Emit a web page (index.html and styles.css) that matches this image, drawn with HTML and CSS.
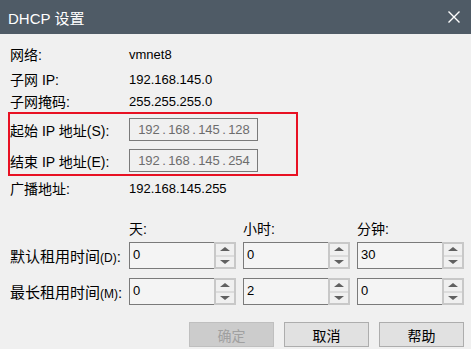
FILE: index.html
```html
<!DOCTYPE html>
<html lang="zh-CN">
<head>
  <meta charset="UTF-8" />
  <title>DHCP 设置</title>
  <link rel="stylesheet" href="styles.css">
</head>
<body>
  <div class="dialog">
    <div class="titlebar">
      <span class="title">DHCP 设置</span>
      <svg class="close" width="12" height="12" viewBox="0 0 12 12">
        <path d="M0.5 0.5 L11.5 11.5 M11.5 0.5 L0.5 11.5" stroke="#fff" stroke-width="1.4" fill="none"/>
      </svg>
    </div>

    <div class="content">
      <div class="row r-net"><span class="label">网络:</span><span class="value">vmnet8</span></div>
      <div class="row r-ip"><span class="label">子网 IP:</span><span class="value">192.168.145.0</span></div>
      <div class="row r-mask"><span class="label">子网掩码:</span><span class="value">255.255.255.0</span></div>

      <div class="highlight">
        <div class="row r-field">
          <span class="label">起始 IP 地址(S):</span>
          <div class="ipbox"><span class="oct">192</span><span class="dot">.</span><span class="oct">168</span><span class="dot">.</span><span class="oct">145</span><span class="dot">.</span><span class="oct">128</span></div>
        </div>
        <div class="row r-field r-field2">
          <span class="label">结束 IP 地址(E):</span>
          <div class="ipbox"><span class="oct">192</span><span class="dot">.</span><span class="oct">168</span><span class="dot">.</span><span class="oct">145</span><span class="dot">.</span><span class="oct">254</span></div>
        </div>
      </div>

      <div class="row r-bcast"><span class="label">广播地址:</span><span class="value">192.168.145.255</span></div>

      <div class="row r-head">
        <span class="label"></span>
        <div class="cols">
          <span class="col-head">天:</span>
          <span class="col-head">小时:</span>
          <span class="col-head">分钟:</span>
        </div>
      </div>

      <div class="row r-spin">
        <span class="label">默认租用时间<small>(D)</small>:</span>
        <div class="cols">
          <div class="spin"><span class="spin-val">0</span><div class="spin-btns"><span class="up"></span><span class="down"></span></div></div>
          <div class="spin"><span class="spin-val">0</span><div class="spin-btns"><span class="up"></span><span class="down"></span></div></div>
          <div class="spin"><span class="spin-val">30</span><div class="spin-btns"><span class="up"></span><span class="down"></span></div></div>
        </div>
      </div>
      <div class="row r-spin r-spin2">
        <span class="label">最长租用时间<small>(M)</small>:</span>
        <div class="cols">
          <div class="spin"><span class="spin-val">0</span><div class="spin-btns"><span class="up"></span><span class="down"></span></div></div>
          <div class="spin"><span class="spin-val">2</span><div class="spin-btns"><span class="up"></span><span class="down"></span></div></div>
          <div class="spin"><span class="spin-val">0</span><div class="spin-btns"><span class="up"></span><span class="down"></span></div></div>
        </div>
      </div>

      <div class="buttons">
        <div class="btn disabled">确定</div>
        <div class="btn">取消</div>
        <div class="btn">帮助</div>
      </div>
    </div>
  </div>
</body>
</html>
```

FILE: styles.css
```css
body {
  margin: 0;
  background: #f0f0f0;
  font-family: "Liberation Sans", "Noto Sans CJK SC", sans-serif;
  color: #000;
  width: 471px;
  height: 349px;
  overflow: hidden;
}
.titlebar {
  height: 34px;
  background: #4f5b66;
  display: flex;
  align-items: center;
  justify-content: space-between;
  padding: 0 11px 0 8px;
  color: #fff;
}
.title {
  font-size: 15px;
}
.close {
  display: block;
}
.content {
  padding: 9px 7px 0 10px;
}
.row {
  display: flex;
  align-items: center;
  height: 22px;
}
.label {
  width: 119px;
  flex: none;
  font-size: 14px;
  white-space: nowrap;
}
.label small {
  font-size: 12px;
}
.value {
  font-size: 13px;
}
.r-ip {
  margin-top: 3px;
}
.highlight {
  margin-left: -2px;
  width: 286px;
  border: 2px solid #e81123;
  padding: 4px 0 0 0;
  height: 56px;
}
.highlight .row {
  height: 23px;
  margin-left: 0;
}
.highlight .label {
  width: 119px;
}
.r-field2 {
  margin-top: 8px;
}
.ipbox {
  box-sizing: border-box;
  width: 129px;
  height: 23px;
  border: 1px solid #7a7a7a;
  display: flex;
  align-items: center;
  padding-left: 7px;
  font-size: 13px;
  color: #6d6d6d;
  margin-left: 0;
}
.oct {
  width: 24px;
  text-align: center;
}
.dot {
  width: 6px;
  text-align: center;
}
.r-bcast {
  margin-top: 1px;
}
.r-head {
  margin-top: 18px;
}
.cols {
  display: flex;
  gap: 7px;
}
.col-head {
  width: 107px;
  font-size: 14px;
}
.r-spin {
  height: 27px;
  margin-top: 3px;
}
.r-spin .label {
  font-size: 15px;
}
.r-spin2 {
  margin-top: 9px;
}
.spin {
  box-sizing: border-box;
  width: 107px;
  height: 27px;
  border: 1px solid #7a7a7a;
  border-right: none;
  display: flex;
  background: #f4f4f4;
}
.spin-val {
  flex: 1;
  font-size: 13px;
  padding: 4px 0 0 3px;
}
.spin-btns {
  box-sizing: border-box;
  width: 22px;
  margin-top: -1px;
  margin-bottom: -1px;
  border: 2px solid #c8c8c8;
  background: #f0f0f0;
  display: flex;
  flex-direction: column;
}
.spin-btns span {
  flex: 1;
  display: flex;
  align-items: center;
  justify-content: center;
}
.spin-btns .down {
  border-top: 2px solid #dcdcdc;
}
.up::before {
  content: "";
  border-left: 5px solid transparent;
  border-right: 5px solid transparent;
  border-bottom: 4px solid #606060;
}
.down::before {
  content: "";
  border-left: 5px solid transparent;
  border-right: 5px solid transparent;
  border-top: 4px solid #606060;
}
.buttons {
  display: flex;
  justify-content: flex-end;
  gap: 10px;
  margin-top: 17px;
}
.btn {
  box-sizing: border-box;
  width: 85px;
  height: 25px;
  border: 1px solid #adadad;
  background: #e1e1e1;
  font-size: 14px;
  display: flex;
  align-items: center;
  justify-content: center;
}
.btn.disabled {
  background: #cccccc;
  border-color: #bfbfbf;
  color: #a0a0a0;
}
```
